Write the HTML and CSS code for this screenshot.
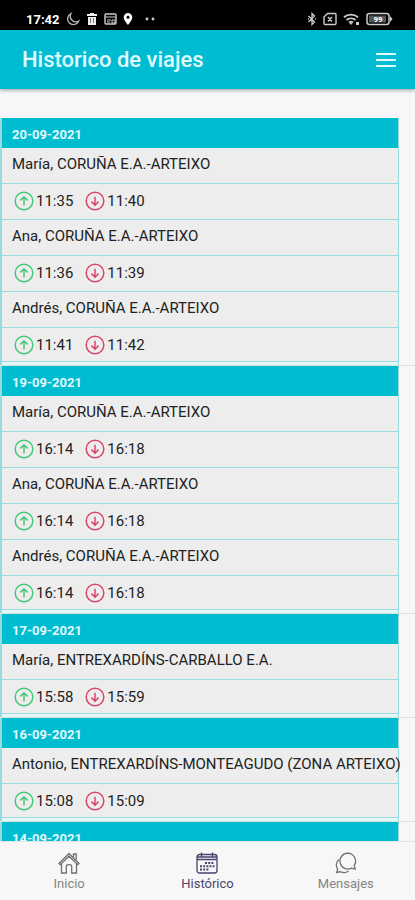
FILE: index.html
```html
<!DOCTYPE html>
<html lang="es">
<head>
<meta charset="utf-8">
<meta name="viewport" content="width=device-width, initial-scale=1">
<title>Historico de viajes</title>
<link rel="stylesheet" href="styles.css">
</head>
<body>
<svg class="defs" aria-hidden="true">
  <symbol id="up" viewBox="0 0 20 20"><circle cx="10" cy="10" r="8.8"/><path d="M10 14.3V6M6.4 9.4 10 5.8l3.6 3.6"/></symbol>
  <symbol id="down" viewBox="0 0 20 20"><circle cx="10" cy="10" r="8.8"/><path d="M10 5.7V14M6.4 10.6 10 14.2l3.6-3.6"/></symbol>
</svg>
<div class="status">
  <div class="status-side">
    <span class="clock">17:42</span>
    <svg width="14" height="14" viewBox="0 0 14 14"><path d="M5 1.5A5.8 5.8 0 1 0 12.8 9 5.6 5.6 0 0 1 5 1.5Z" fill="none" stroke="#bbb" stroke-width="1.3"/></svg>
    <svg width="12" height="14" viewBox="0 0 12 14"><path d="M1 2h3V1h4v1h3v2H1ZM2 5h8v8H2Z" fill="#eee"/><path d="M4.5 6v5M7.5 6v5" stroke="#777"/></svg>
    <svg width="13" height="14" viewBox="0 0 13 14"><rect x="1" y="2" width="11" height="10" rx="1" fill="none" stroke="#ccc" stroke-width="1.4"/><path d="M1 5h11M3 8h4M3 10h3M8 8h3v3H8Z" stroke="#ccc" fill="none"/></svg>
    <svg width="10" height="14" viewBox="0 0 10 14"><path fill-rule="evenodd" d="M5 1a4.300 4.300 0 0 0-4.300 4.300C.7 8.500 5 13 5 13s4.300-4.500 4.300-7.700A4.300 4.300 0 0 0 5 1Zm0 2.800a1.500 1.500 0 1 1 0 3 1.500 1.500 0 0 1 0-3Z" fill="#fff"/></svg>
    <svg class="dots" width="10" height="4" viewBox="0 0 10 4"><circle cx="2" cy="2" r="1.400" fill="#ccc"/><circle cx="8" cy="2" r="1.400" fill="#ccc"/></svg>
  </div>
  <div class="status-side">
    <svg width="10" height="14" viewBox="0 0 10 14"><path d="m1.500 4 6 6L5 12.500v-11L7.500 4l-6 6M1 7h1M8 7h1" fill="none" stroke="#ccc" stroke-width="1.300"/></svg>
    <svg width="14" height="14" viewBox="0 0 14 14"><path d="M4.500 1.500H12a1 1 0 0 1 1 1v9a1 1 0 0 1-1 1H2a1 1 0 0 1-1-1V5ZM5 5l4 4.500M9 5 5 9.500" fill="none" stroke="#ccc" stroke-width="1.400"/></svg>
    <svg width="17" height="14" viewBox="0 0 17 14"><path d="M1 5.300a10.500 10.500 0 0 1 14 0M3.500 8a7 7 0 0 1 9 0M6 10.500a3.500 3.500 0 0 1 4 0" fill="none" stroke="#ccc" stroke-width="1.900"/><path d="M6.500 11h3L8 13ZM13 10h3v3h-3Z" fill="#ccc"/></svg>
    <svg width="27" height="14" viewBox="0 0 27 14"><rect x="1" y="1.500" width="22" height="11" rx="2.500" fill="none" stroke="#ccc" stroke-width="1.500"/><rect x="3" y="3.500" width="17" height="7" fill="#555"/><path d="m24 4 2.500 3L24 10Z" fill="#ccc"/><text x="12" y="10" text-anchor="middle" class="battery">99</text></svg>
  </div>
</div>
<header class="bar">
  <h1>Historico de viajes</h1>
  <button class="menu" type="button" aria-label="Menú"><svg width="20" height="14" viewBox="0 0 20 14"><path d="M0 1h20M0 7h20M0 13h20" stroke="#e0fbff" stroke-width="2"/></svg></button>
</header>
<main>
  <section class="day"><table>
    <thead><tr><th scope="col">20-09-2021</th></tr></thead>
    <tbody>
      <tr><td>María, CORUÑA E.A.-ARTEIXO</td></tr>
      <tr><td class="times"><div><span class="time"><svg class="up"><use href="#up"/></svg>11:35</span><span class="time"><svg class="down"><use href="#down"/></svg>11:40</span></div></td></tr>
      <tr><td>Ana, CORUÑA E.A.-ARTEIXO</td></tr>
      <tr><td class="times"><div><span class="time"><svg class="up"><use href="#up"/></svg>11:36</span><span class="time"><svg class="down"><use href="#down"/></svg>11:39</span></div></td></tr>
      <tr><td>Andrés, CORUÑA E.A.-ARTEIXO</td></tr>
      <tr><td class="times"><div><span class="time"><svg class="up"><use href="#up"/></svg>11:41</span><span class="time"><svg class="down"><use href="#down"/></svg>11:42</span></div></td></tr>
    </tbody>
  </table></section>
  <section class="day"><table>
    <thead><tr><th scope="col">19-09-2021</th></tr></thead>
    <tbody>
      <tr><td>María, CORUÑA E.A.-ARTEIXO</td></tr>
      <tr><td class="times"><div><span class="time"><svg class="up"><use href="#up"/></svg>16:14</span><span class="time"><svg class="down"><use href="#down"/></svg>16:18</span></div></td></tr>
      <tr><td>Ana, CORUÑA E.A.-ARTEIXO</td></tr>
      <tr><td class="times"><div><span class="time"><svg class="up"><use href="#up"/></svg>16:14</span><span class="time"><svg class="down"><use href="#down"/></svg>16:18</span></div></td></tr>
      <tr><td>Andrés, CORUÑA E.A.-ARTEIXO</td></tr>
      <tr><td class="times"><div><span class="time"><svg class="up"><use href="#up"/></svg>16:14</span><span class="time"><svg class="down"><use href="#down"/></svg>16:18</span></div></td></tr>
    </tbody>
  </table></section>
  <section class="day"><table>
    <thead><tr><th scope="col">17-09-2021</th></tr></thead>
    <tbody>
      <tr><td>María, ENTREXARDÍNS-CARBALLO E.A.</td></tr>
      <tr><td class="times"><div><span class="time"><svg class="up"><use href="#up"/></svg>15:58</span><span class="time"><svg class="down"><use href="#down"/></svg>15:59</span></div></td></tr>
    </tbody>
  </table></section>
  <section class="day"><table>
    <thead><tr><th scope="col">16-09-2021</th></tr></thead>
    <tbody>
      <tr><td>Antonio, ENTREXARDÍNS-MONTEAGUDO (ZONA ARTEIXO)</td></tr>
      <tr><td class="times"><div><span class="time"><svg class="up"><use href="#up"/></svg>15:08</span><span class="time"><svg class="down"><use href="#down"/></svg>15:09</span></div></td></tr>
    </tbody>
  </table></section>
  <section class="day"><table>
    <thead><tr><th scope="col">14-09-2021</th></tr></thead>
  </table></section>
</main>
<nav class="tabs">
  <a href="#inicio"><svg width="22" height="22" viewBox="0 0 22 22"><path d="M1 11.500 11 1.500l10 10-1.300 1.200L11 4.200l-8.700 8.500ZM3.500 12v9h4.800v-6.500q0-1.800 2.700-1.800t2.700 1.800V21h4.800v-9M15.500 5V2h2.700v5.500"/></svg>Inicio</a>
  <a href="#historico" class="active" aria-current="page"><svg width="22" height="22" viewBox="0 0 22 22"><rect x="1" y="2.500" width="20" height="18.500" rx="2.500"/><path d="M1 7.500h20M5.500.500v4M16.500.500v4M1 5h20"/><path d="M9 11h9.500M4 14.300h14.500M4 17.600h9.500" stroke-width="2" stroke-dasharray="2 1.200"/></svg>Histórico</a>
  <a href="#mensajes"><svg width="22" height="22" viewBox="0 0 22 22"><path d="M12.800 1.200a7.900 7.900 0 1 0 3.700 14.900l3.700 1-1-3.600A7.900 7.900 0 0 0 12.800 1.200ZM4 7.500A7 7 0 0 0 2.600 17l-.8 3.500 3.500-.9a7.500 7.500 0 0 0 8.200-.6"/></svg>Mensajes</a>
</nav>
</body>
</html>
```
FILE: styles.css
```css
* { box-sizing: border-box; }

body {
  margin: 0;
  height: 100vh;
  display: flex;
  flex-direction: column;
  background: #f7f7f7;
  color: #222;
  font-family: Roboto, "Liberation Sans", sans-serif;
  overflow: hidden;
}

.defs { position: absolute; width: 0; height: 0; }

.status {
  flex: none;
  display: flex;
  justify-content: space-between;
  height: 30px;
  padding: 8px 22px 0 26px;
  background: #000;
}

.status-side { display: flex; align-items: center; height: 22px; gap: 6px; }
.status svg { flex: none; }
.clock { color: #fff; font-size: 13px; font-weight: 700; }
.dots { margin-left: 6px; }
.battery { fill: #fff; font-size: 8px; font-weight: 700; }

.bar {
  flex: none;
  display: flex;
  align-items: center;
  justify-content: space-between;
  height: 59px;
  padding: 0 19px 0 22px;
  background: #00bcd2;
  box-shadow: 0 1px 4px rgba(0, 0, 0, .4);
  z-index: 1;
}

h1 { margin: 0; color: #e0fbff; font-size: 22px; font-weight: 500; }

.menu { display: flex; padding: 0; border: 0; background: none; }

main { flex: 1; min-height: 0; overflow: hidden; padding-top: 29px; }

.day {
  padding-right: 16px;
  border-bottom: 1px solid #dedede;
}

table {
  width: 100%;
  table-layout: fixed;
  border-collapse: separate;
  border-spacing: 0;
  border: solid #9adbdf;
  border-width: 0 1px 0 2px;
  background: #ededed;
}

tbody::after {
  content: "";
  display: block;
  height: 3px;
  background: #e6f6f6;
}

th {
  height: 30px;
  padding: 2px 10px 0;
  background: #00bcd0;
  color: #e0fbff;
  font-size: 13px;
  font-weight: 700;
  text-align: left;
}

td {
  height: 36px;
  padding: 0 0 4px 10px;
  border-bottom: 1px solid #9adbdf;
  font-size: 15px;
  white-space: nowrap;
}

.times { padding: 0 0 2px 12px; }
tr:last-child .times { height: 34px; padding-bottom: 0; }
.times div { display: flex; gap: 12px; }
.time { display: flex; align-items: center; gap: 2px; }
.time svg { width: 20px; height: 20px; fill: none; stroke-width: 1.500; }
.up { stroke: #43c878; }
.down { stroke: #dc4668; }

.tabs {
  flex: none;
  display: flex;
  height: 59px;
  border-top: 1px solid #e4e4e4;
  background: #f7f7f7;
}

.tabs a {
  flex: 1;
  display: flex;
  flex-direction: column;
  align-items: center;
  gap: 2px;
  padding-top: 10px;
  color: #858585;
  font-size: 13px;
  text-decoration: none;
}

.tabs svg { fill: none; stroke: #707070; stroke-width: 1.300; }
.tabs .active { color: #4c4270; }
.tabs .active svg { stroke: #4c4270; }
```
